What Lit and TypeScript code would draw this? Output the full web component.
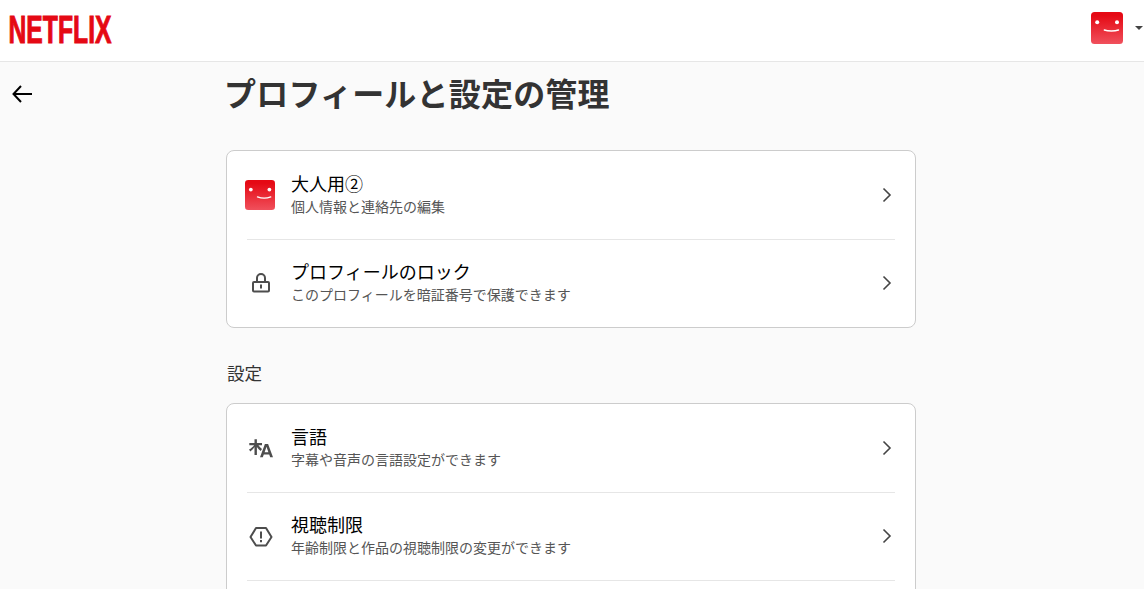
import { LitElement, html, css, svg } from "lit";
import { customElement } from "lit/decorators.js";

const avatar = (size: number) => html`
  <svg width=${size} height=${size} viewBox="0 0 32 32" style="display:block">
    <defs>
      <linearGradient id="face" x1="0" y1="0" x2="0" y2="1">
        <stop offset="0.1" stop-color="#e50914"></stop>
        <stop offset="1" stop-color="#f0505c"></stop>
      </linearGradient>
    </defs>
    <rect width="32" height="32" rx="3.5" fill="url(#face)"></rect>
    <circle cx="6.2" cy="10.2" r="2" fill="#fff"></circle>
    <circle cx="26" cy="10.2" r="2" fill="#fff"></circle>
    <path d="M13.300 18c3.800 1.400 10.400 1.400 14.200 0" fill="none" stroke="#fff" stroke-width="1.400" stroke-linecap="round"></path>
  </svg>
`;

const icons = {
  lock: svg`<path fill="none" stroke="currentColor" stroke-width="2" d="M5 10h14a1 1 0 0 1 1 1v7.500a1 1 0 0 1-1 1H5a1 1 0 0 1-1-1V11a1 1 0 0 1 1-1zM8 10V6a4 4 0 0 1 8 0v4"></path><path fill="currentColor" d="M11 12.500h2v4h-2z"></path>`,
  lang: svg`<path fill="currentColor" d="M5.500 3.300h2.400V7H13v2.300H9.400c1 1.600 2.300 2.800 3.600 3.700l-1.300 2c-1.400-1.100-2.800-2.500-3.800-4.100V19H5.500v-7.900C4.400 12.800 2.800 14.500 1.300 15.500L0 13.600C2 12.500 4 10.900 5.100 9.300H.3V7h5.200zM15.900 8h3.200L24 21.300h-2.800l-1-2.900h-5.400l-1 2.900H11zM15.600 16.200h3.800l-1.900-5.400z"></path>`,
  warn: svg`<path fill="none" stroke="currentColor" stroke-width="2" stroke-linejoin="round" d="M7 3h10l5.500 9L17 20.500H7L1.500 12z"></path><path fill="currentColor" d="M11 6.500h2v7h-2zM11 15h2v2.200h-2z"></path>`,
};

@customElement("app-root")
export class AppRoot extends LitElement {
  static styles = css`
    :host {
      display: block;
      height: 100vh;
      overflow: hidden;
      background: #fafafa;
      color: #000;
      font-family: "Noto Sans CJK JP", "Liberation Sans", sans-serif;
    }
    .top {
      display: flex;
      justify-content: space-between;
      height: 61px;
      background: #fff;
      border-bottom: 1px solid #e6e6e6;
      padding: 0 1px 0 8px;
    }
    .logo {
      display: block;
      margin-top: 8px;
      overflow: visible;
    }
    .logo text {
      font-family: "Liberation Sans", sans-serif;
      font-weight: 700;
      font-size: 38.5px;
      fill: #e50914;
      stroke: #e50914;
      stroke-width: 1px;
    }
    .account {
      display: flex;
      align-items: center;
      gap: 12px;
      margin-top: -5px;
    }
    .caret {
      width: 0;
      height: 0;
      border: 4px solid transparent;
      border-top-color: #444;
      border-bottom-width: 0;
    }
    .page {
      display: grid;
      grid-template-columns: 226px 690px;
    }
    .back {
      padding: 20px 0 0 12px;
    }
    .back svg {
      display: block;
    }
    h1 {
      margin: 0 0 0 -2px;
      font-size: 32px;
      font-weight: 700;
      line-height: 40px;
      letter-spacing: 0.2px;
      color: #333;
      padding-top: 10px;
    }
    .card {
      background: #fff;
      border: 1px solid #ccc;
      border-radius: 8px;
      padding: 0 20px;
    }
    .first {
      margin-top: 38px;
    }
    h2 {
      margin: 0;
      font-size: 17.5px;
      font-weight: 400;
      line-height: 24px;
      color: #333;
      padding: 33px 0 18px 1px;
    }
    .row {
      display: grid;
      grid-template-columns: 28px 1fr 16px;
      column-gap: 16px;
      align-items: center;
      height: 88px;
      border-bottom: 1px solid #e6e6e6;
      box-sizing: border-box;
    }
    .row:first-child {
      height: 89px;
    }
    .row:last-child {
      border-bottom: 0;
      height: 87px;
    }
    .ico {
      display: flex;
      justify-content: center;
      color: #4d4d4d;
    }
    .avatar {
      margin-left: -2px;
      justify-content: flex-start;
    }
    .text {
      padding-bottom: 4px;
    }
    .name {
      font-size: 18px;
      line-height: 24px;
      color: #000;
    }
    .sub {
      margin-top: 1px;
      font-size: 14px;
      line-height: 20px;
      color: #555;
    }
    .chev {
      display: block;
      color: #444;
      margin-bottom: 1px;
    }
  `;

  row(icon: unknown, name: string, sub: string, extra = "") {
    return html`
      <div class="row">
        <div class="ico ${extra}">${icon}</div>
        <div class="text">
          <div class="name">${name}</div>
          <div class="sub">${sub}</div>
        </div>
        <svg class="chev" width="16" height="16" viewBox="0 0 16 16">
          <path d="M4.500 1.500 11 8l-6.500 6.500" fill="none" stroke="currentColor" stroke-width="1.600"></path>
        </svg>
      </div>
    `;
  }

  glyph(body: unknown) {
    return html`<svg width="24" height="24" viewBox="0 0 24 24">${body}</svg>`;
  }

  render() {
    return html`
      <header class="top">
        <svg class="logo" width="106" height="44" viewBox="0 0 106 44">
          <text x="0.5" y="34.5" textLength="103" lengthAdjust="spacingAndGlyphs">NETFLIX</text>
        </svg>
        <div class="account">${avatar(32)}<span class="caret"></span></div>
      </header>
      <div class="page">
        <div class="back">
          <svg width="20" height="24" viewBox="0 0 20 24">
            <path d="M9 4 1.500 12 9 20M2 12h18" fill="none" stroke="#000" stroke-width="2"></path>
          </svg>
        </div>
        <main>
          <h1>プロフィールと設定の管理</h1>
          <section class="card first">
            ${this.row(avatar(32), "大人用②", "個人情報と連絡先の編集", "avatar")}
            ${this.row(this.glyph(icons.lock), "プロフィールのロック", "このプロフィールを暗証番号で保護できます")}
          </section>
          <h2>設定</h2>
          <section class="card">
            ${this.row(this.glyph(icons.lang), "言語", "字幕や音声の言語設定ができます")}
            ${this.row(this.glyph(icons.warn), "視聴制限", "年齢制限と作品の視聴制限の変更ができます")}
            ${this.row("", "", "")}
          </section>
        </main>
      </div>
    `;
  }
}
